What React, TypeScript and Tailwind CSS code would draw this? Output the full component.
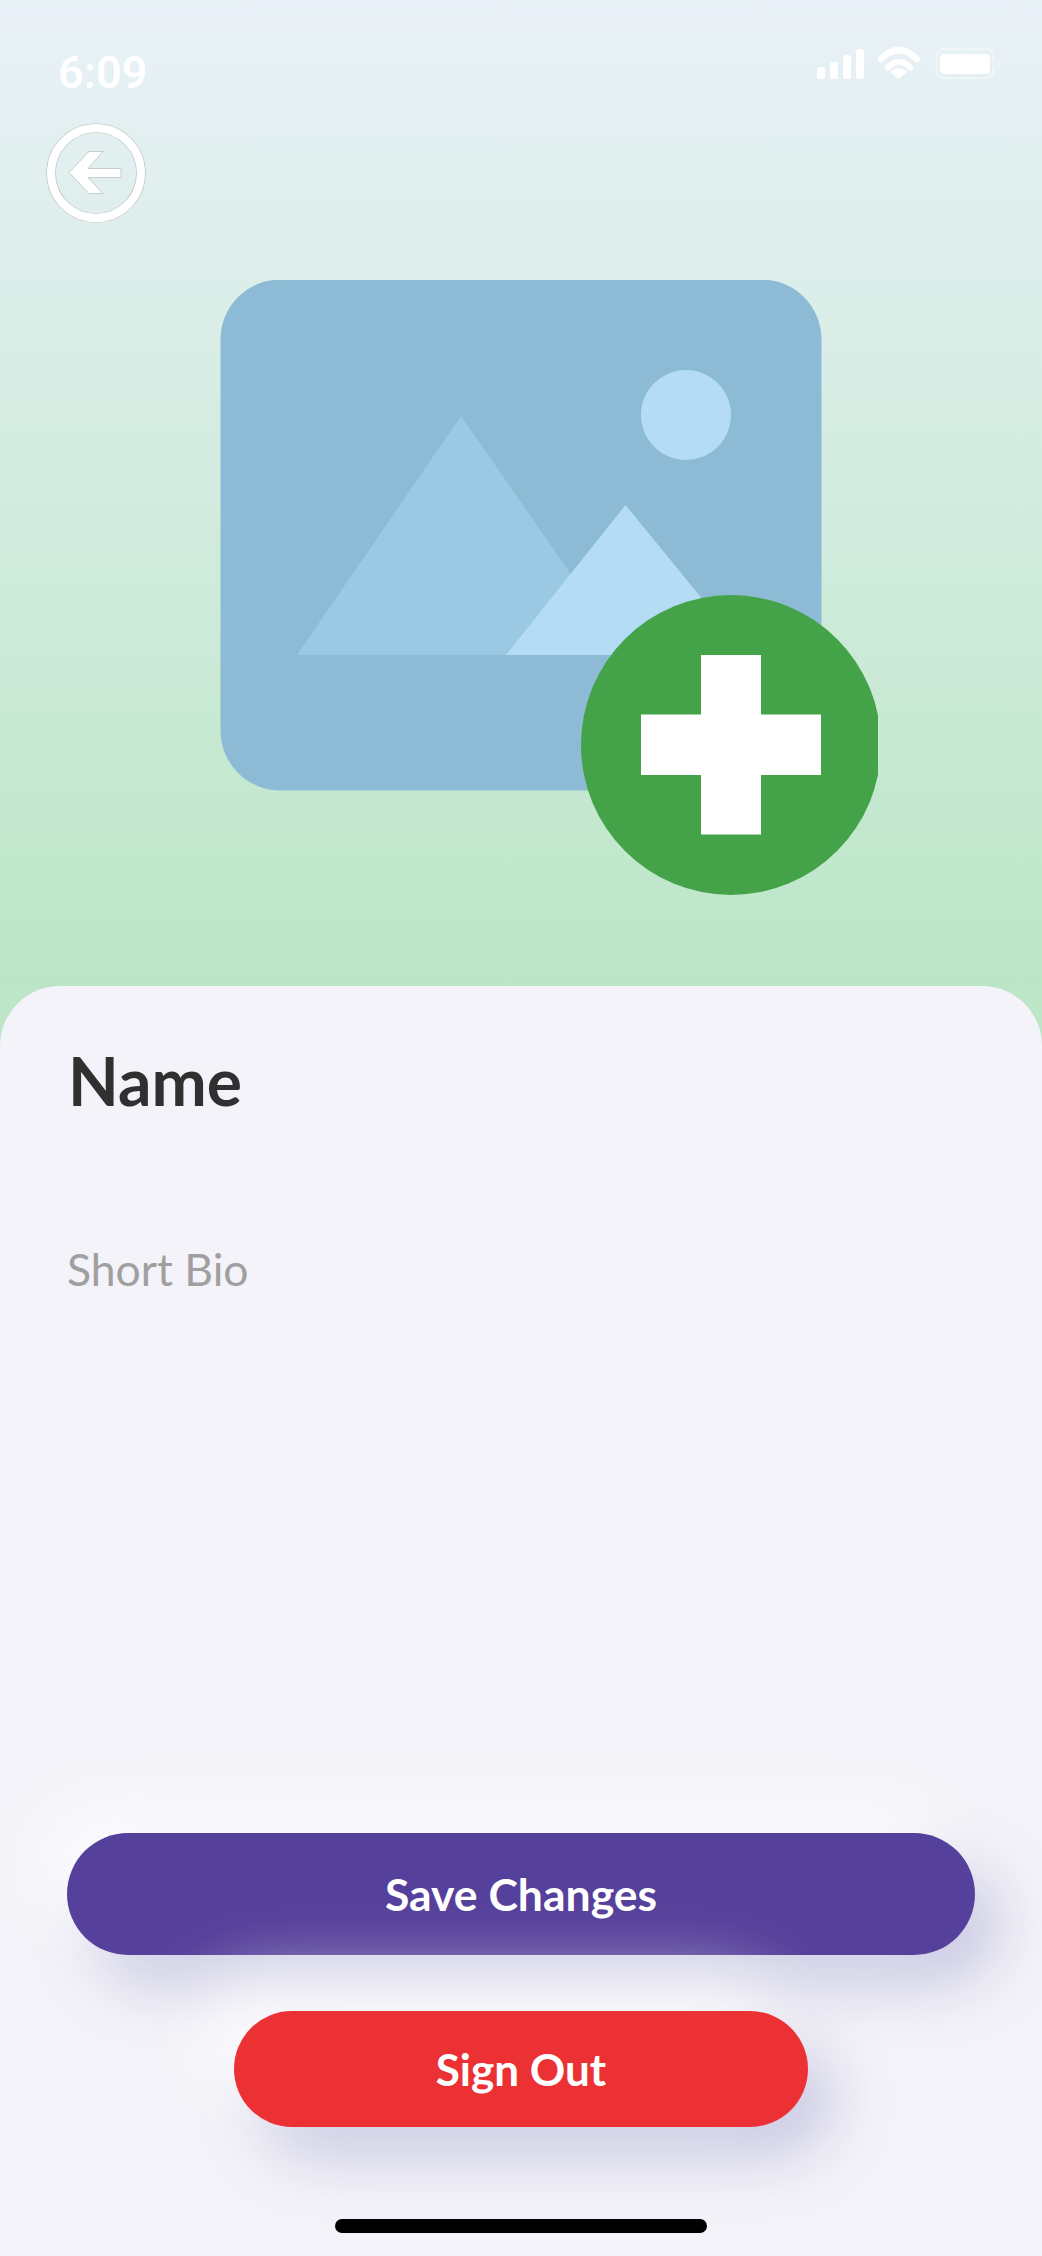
import React from "react";

const StatusIcons: React.FC = () => (
  <svg width="185" height="36" viewBox="817 45 185 36" fill="#fff">
    <rect x="817" y="67" width="8" height="12" rx="2.5" />
    <rect x="830" y="62" width="8" height="17" rx="2.5" />
    <rect x="843" y="55" width="8" height="24" rx="2.5" />
    <rect x="856" y="49" width="8" height="30" rx="2.5" />
    <path d="M881 59 Q899 41 917 59" fill="none" stroke="#fff" strokeWidth="6.5" strokeLinecap="round" />
    <path d="M888 67.5 Q899 56 910 67.5" fill="none" stroke="#fff" strokeWidth="6" strokeLinecap="round" />
    <path d="M898.8 79 L890 71.5 Q898.8 65 907.5 71.5 Z" />
    <rect x="936.5" y="49" width="57" height="29" rx="7" fill="none" stroke="#fff" strokeOpacity="0.75" strokeWidth="2" strokeDasharray="1.5 1.5" />
    <rect x="940" y="54" width="50" height="20" rx="4" />
    <path d="M999 59 Q1001.5 63.5 999 69 Z" fillOpacity="0.5" />
  </svg>
);

const BackIcon: React.FC = () => (
  <svg width="100" height="100" viewBox="46 123.5 100 100" fill="none">
    <circle cx="96" cy="173.5" r="44.9" stroke="#b4bcba" strokeWidth="9.4" />
    <circle cx="96" cy="173.5" r="44.9" stroke="#fff" strokeWidth="8.2" />
    <path d="M69 173 L89 152 L103 152 L88 169 L121 169 L121 178 L88 178 L103 194 L89 194 Z" fill="#fff" stroke="#b4bcba" strokeWidth="0.7" />
  </svg>
);

const AddImageArt: React.FC = () => (
  <svg width="658" height="654" viewBox="220 280 658 654">
    <rect x="220.5" y="279.5" width="601" height="511" rx="60" fill="#8dbbd5" />
    <path d="M461 416 L297 655 L627 655 Z" fill="#9bc9e4" />
    <path d="M625.5 505 L506 655 L748 655 Z" fill="#b4dcf5" />
    <ellipse cx="686" cy="415" rx="45" ry="45" fill="#b4dcf5" />
    <ellipse cx="731" cy="745" rx="150" ry="150" fill="#44a349" />
    <path d="M701 655 H761 V714.5 H821 V775 H761 V834.5 H701 V775 H641 V714.5 H701 Z" fill="#fff" />
  </svg>
);

export default function App() {
  return (
    <div className="flex flex-col w-[1042px] h-[2256px] overflow-hidden bg-[#bce6c7] font-['Lato',sans-serif]">
      {/* Header */}
      <div className="h-[986px] shrink-0 bg-gradient-to-b from-[#e9f1f8] to-[#bbe6c6]">
        <div className="flex justify-between items-start pl-[58px] pr-[40px] pt-[45px]">
          <span className="font-['Roboto',sans-serif] text-[45px] leading-[52px] mt-[2px] font-semibold text-white">6:09</span>
          <StatusIcons />
        </div>
        <div className="pl-[46px] pt-[24px]">
          <BackIcon />
        </div>
        <div className="pl-[220px] pt-[57px]">
          <AddImageArt />
        </div>
      </div>

      {/* Sheet */}
      <div className="flex flex-col flex-1 rounded-t-[60px] bg-[#f4f3f9] px-[67px]">
        <h1 className="mt-[55px] ml-[1px] text-[66px] leading-[80px] font-bold text-[#303030]">Name</h1>
        <p className="mt-[121px] text-[44.5px] leading-[54px] text-[#a0a0a0]">Short Bio</p>

        <div className="flex-1" />

        <button className="h-[122px] w-[908px] rounded-full bg-[#55409b] text-[44.5px] font-bold text-white shadow-[-30px_-30px_70px_rgba(255,255,255,0.75),25px_30px_60px_rgba(130,130,190,0.37)]">
          Save Changes
        </button>
        <button className="mt-[56px] self-center h-[116px] w-[574px] rounded-full bg-[#ec3134] text-[44px] font-bold text-white shadow-[-30px_-30px_70px_rgba(255,255,255,0.75),25px_30px_60px_rgba(130,130,190,0.37)]">
          Sign Out
        </button>
        <div className="mt-[92px] mb-[23px] self-center h-[14px] w-[372px] rounded-full bg-black" />
      </div>
    </div>
  );
}
